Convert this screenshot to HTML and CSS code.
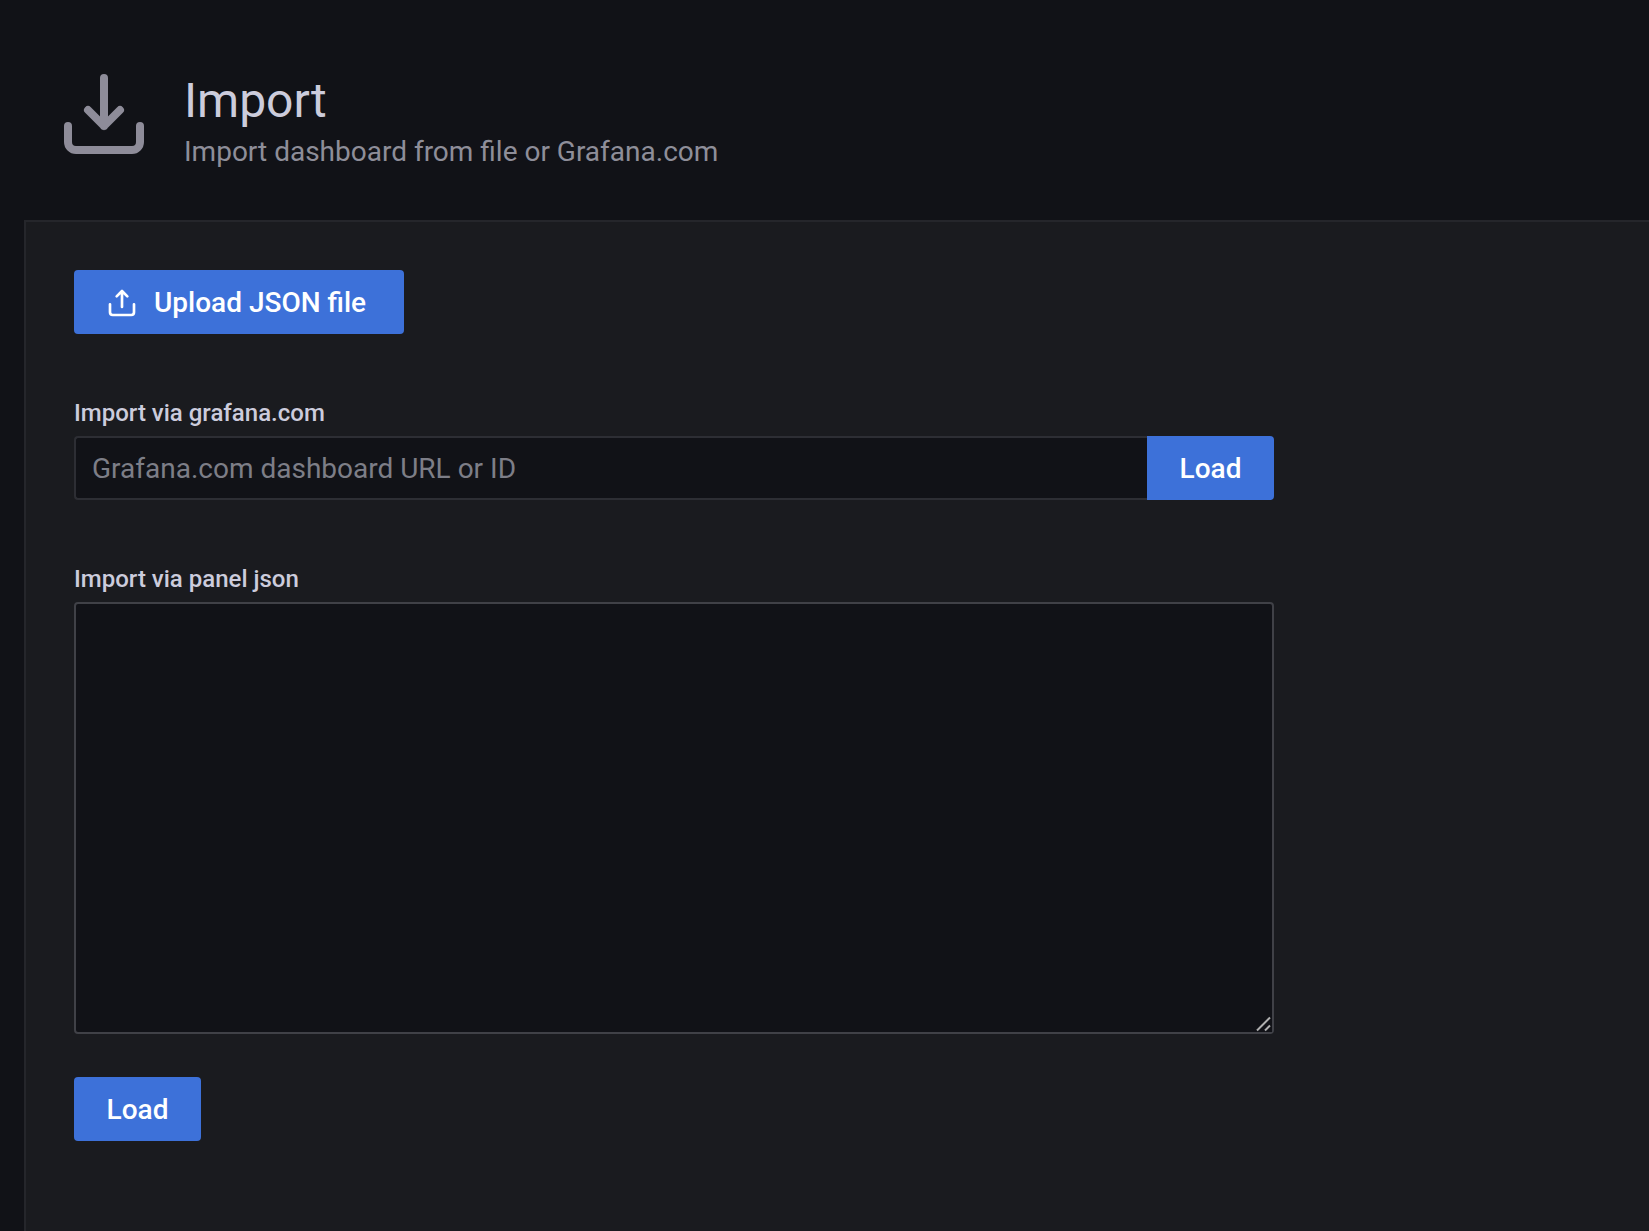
FILE: index.html
```html
<!DOCTYPE html>
<html lang="en">
<head>
  <meta charset="utf-8">
  <meta name="viewport" content="width=device-width, initial-scale=1">
  <title>Import - Grafana</title>
  <link rel="stylesheet" href="styles.css">
</head>
<body>
  <div class="page">
    <header class="page-header">
      <svg class="page-icon" viewBox="0 0 24 24" aria-hidden="true">
        <path d="M12 3v12M8 11l4 4 4-4M3 15v4a2 2 0 0 0 2 2h14a2 2 0 0 0 2-2v-4"/>
      </svg>
      <div class="page-heading">
        <h1 class="page-title">Import</h1>
        <p class="page-subtitle">Import dashboard from file or Grafana.com</p>
      </div>
    </header>
    <main class="panel">
      <button class="button button-upload" type="button">
        <svg class="button-icon" viewBox="0 0 24 24" aria-hidden="true">
          <path d="M12 3v12M8 7l4-4 4 4M3 13v6a2 2 0 0 0 2 2h14a2 2 0 0 0 2-2v-6"/>
        </svg>
        <span>Upload JSON file</span>
      </button>
      <form class="form">
        <label class="label" for="gcom">Import via grafana.com</label>
        <div class="input-row">
          <input class="input" id="gcom" type="text" placeholder="Grafana.com dashboard URL or ID">
          <button class="button button-attached" type="submit">Load</button>
        </div>
      </form>
      <form class="form">
        <label class="label" for="json">Import via panel json</label>
        <div class="textarea-wrap">
          <textarea class="textarea" id="json" rows="10"></textarea>
          <svg class="resize-grip" viewBox="0 0 16 16" aria-hidden="true">
            <path d="M1 14.5 14 1.5M9 14.5l5-5"/>
          </svg>
        </div>
        <button class="button button-submit" type="submit">Load</button>
      </form>
    </main>
  </div>
</body>
</html>
```
FILE: styles.css
```css
* {
  box-sizing: border-box;
}

body {
  margin: 0;
  background: #111217;
  color: #ccccdc;
  color-scheme: dark;
  font-family: Roboto, "Liberation Sans", sans-serif;
  font-size: 28px;
  line-height: 40px;
}

.page {
  display: flex;
  flex-direction: column;
  min-height: 100vh;
  padding-left: 24px;
}

.page-header {
  display: flex;
  align-items: flex-start;
  gap: 32px;
  padding: 66px 32px 48px;
}

.page-icon {
  flex: none;
  width: 96px;
  height: 96px;
  fill: none;
  stroke: #8e8c99;
  stroke-width: 2;
  stroke-linecap: round;
  stroke-linejoin: round;
}

.page-title {
  margin: 4px 0 0;
  font-size: 48px;
  font-weight: 400;
  line-height: 62px;
}

.page-subtitle {
  margin: 0;
  color: #8e8e99;
}

.panel {
  flex: 1;
  padding: 48px;
  border: 2px solid #25262b;
  border-width: 2px 0 0 2px;
  background: #1a1b1f;
}

.button {
  display: inline-flex;
  align-items: center;
  justify-content: center;
  gap: 16px;
  min-width: 127px;
  height: 64px;
  padding: 2px 32px 0;
  border: 0;
  border-radius: 4px;
  background: #3d71d9;
  color: #ffffff;
  font: inherit;
  font-weight: 500;
  cursor: pointer;
}

.button-upload {
  display: flex;
  justify-content: flex-start;
  min-width: 330px;
}

.button-icon {
  width: 32px;
  height: 32px;
  fill: none;
  stroke: currentColor;
  stroke-width: 2;
  stroke-linecap: round;
  stroke-linejoin: round;
}

.button-attached {
  border-radius: 0 4px 4px 0;
}

.form {
  display: flex;
  flex-direction: column;
  max-width: 1200px;
  margin-top: 64px;
}

.label {
  margin-bottom: 8px;
  font-size: 24px;
  font-weight: 500;
  line-height: 30px;
}

.input-row {
  display: flex;
}

.input {
  flex: 1;
  min-width: 0;
  height: 64px;
  padding: 0 16px;
  border: 2px solid #2d2e34;
  border-right: 0;
  border-radius: 4px 0 0 4px;
  background: #111217;
  color: #ccccdc;
  font: inherit;
}

.input::placeholder {
  color: #7d7e87;
  opacity: 1;
}

.textarea-wrap {
  position: relative;
  display: flex;
}

.textarea {
  flex: 1;
  height: 432px;
  padding: 8px 16px;
  border: 2px solid #404147;
  border-radius: 4px;
  background: #111217;
  color: #ccccdc;
  font: inherit;
  resize: vertical;
}

/* Drawn over the native grip; clicks pass through to it. */
.resize-grip {
  position: absolute;
  right: 2px;
  bottom: 2px;
  width: 16px;
  height: 16px;
  background: #111217;
  fill: none;
  stroke: #b0b0b0;
  stroke-width: 2;
  pointer-events: none;
}

.button-submit {
  align-self: flex-start;
  margin-top: 43px;
}
```
